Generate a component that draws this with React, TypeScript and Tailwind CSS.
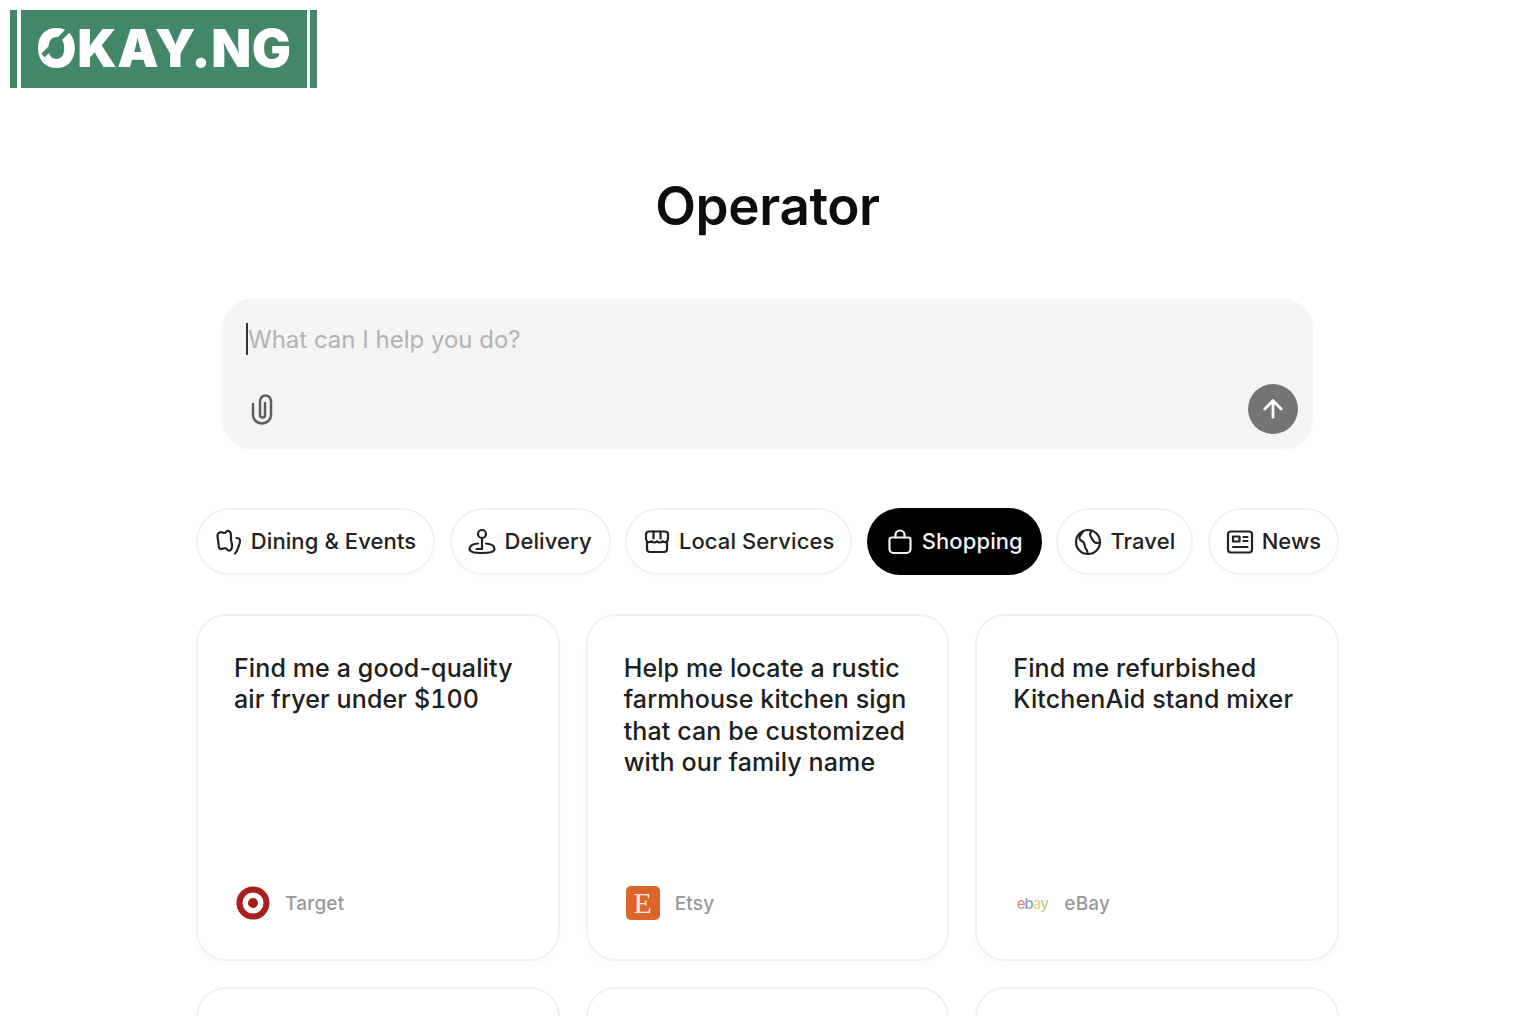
import { ReactNode } from "react";
import { ArrowUp } from "lucide-react";

type Category = {
  label: string;
  icon: ReactNode;
  active?: boolean;
  width: string;
};

function IconProps({ children }: { children: ReactNode }) {
  return (
    <svg
      width="28"
      height="28"
      viewBox="0 0 28 28"
      fill="none"
      stroke="currentColor"
      strokeWidth="2.200"
      strokeLinecap="round"
      strokeLinejoin="round"
      className="shrink-0"
    >
      {children}
    </svg>
  );
}

const categories: Category[] = [
  {
    label: "Dining & Events",
    width: "w-[239px]",
    icon: (
      <IconProps>
        <path d="M2.500 7.500c0-2.500 3-4 5-3 1 .5 2 1 3 0 1-1.300 2.500-2 4-1 1.500.8 1.500 3 1.500 4.500v3c0 3 1.500 5 1 8-.3 2-1.500 4-3.500 3.500-1.500-.4-2-2.500-3.500-2.500-1.500 0-2.500 1.500-4.500 1-2-.5-2-3-2-5 0-3-1-5.500-1-8.500Z" />
        <path d="M21.500 10c1.500 0 3 .5 3.500 2 .3 3-1 5.500-2 8-.5 1.800-1 3.500-3 5.500" />
      </IconProps>
    ),
  },
  {
    label: "Delivery",
    width: "w-[161px]",
    icon: (
      <IconProps>
        <circle cx="14" cy="6" r="4" />
        <path d="M14 10v11" />
        <path d="M10 15.500C5 16 1.500 18 1.500 21c0 2.500 4 4 12.500 4s12.500-1.500 12.500-4c0-3-3.500-5-8.500-5.500" />
        <path d="M8.500 21H14" />
      </IconProps>
    ),
  },
  {
    label: "Local Services",
    width: "w-[227px]",
    icon: (
      <IconProps>
        <path d="M6 3.500h16a3 3 0 0 1 3 3v4.500a3.200 3.200 0 0 1-5.500 2.200 3.700 3.700 0 0 1-5.500 0 3.700 3.700 0 0 1-5.500 0A3.200 3.200 0 0 1 3 11V6.500a3 3 0 0 1 3-3Z" />
        <path d="M10.500 3.500v7M17.500 3.500v7" />
        <path d="M4 13.500V21a3 3 0 0 0 3 3h14a3 3 0 0 0 3-3v-7.500" />
      </IconProps>
    ),
  },
  {
    label: "Shopping",
    width: "w-[175px]",
    active: true,
    icon: (
      <IconProps>
        <path d="M5.500 9.500h17a2 2 0 0 1 2 2V21a4 4 0 0 1-4 4h-13a4 4 0 0 1-4-4v-9.500a2 2 0 0 1 2-2Z" />
        <path d="M9.500 9.500V7a4.500 4.500 0 0 1 9 0v2.500" />
      </IconProps>
    ),
  },
  {
    label: "Travel",
    width: "w-[137px]",
    icon: (
      <IconProps>
        <circle cx="14" cy="14" r="12" />
        <path d="M9 3.500c-1.500 2.500-4 4-3.500 7 .5 2.300 3.500 2.500 4.500 4.500 1 2 .5 4.500 2 6 .8.800 1.500 2 1.500 4" />
        <path d="M17.500 3c-1.500 2-2 4-.5 6 1.500 2.200 2 4.500 4 5.500 1.500.7 3 .5 5 0" />
      </IconProps>
    ),
  },
  {
    label: "News",
    width: "w-[131px]",
    icon: (
      <IconProps>
        <rect x="2" y="3.500" width="24" height="21" rx="3" />
        <rect x="7" y="8.500" width="6.500" height="5" />
        <path d="M17.500 9h4M17.500 13h4M7 19h14.500" />
      </IconProps>
    ),
  },
];

function TargetLogo() {
  return (
    <svg width="34" height="34" viewBox="0 0 34 34" className="shrink-0">
      <circle cx="17" cy="17" r="13.500" fill="none" stroke="#a81f1c" strokeWidth="6" />
      <circle cx="17" cy="17" r="5" fill="#a81f1c" />
    </svg>
  );
}

function EtsyLogo() {
  return (
    <div className="flex h-[34px] w-[34px] shrink-0 items-center justify-center rounded-[5px] bg-[#dd6529] font-['Liberation_Serif',serif] text-[30px] leading-none text-[#fbeadd]">
      E
    </div>
  );
}

function EbayLogo() {
  return (
    <div className="flex w-[34px] shrink-0 justify-center font-['Inter',sans-serif] text-[15px] leading-none font-medium tracking-[-1px] opacity-70 blur-[0.4px]">
      <span className="text-[#d9534f]">e</span>
      <span className="text-[#4a6fc9]">b</span>
      <span className="text-[#e8c14a]">a</span>
      <span className="text-[#9cc04a]">y</span>
    </div>
  );
}

const cards = [
  {
    text: ["Find me a good-quality", "air fryer under $100"],
    vendor: "Target",
    logo: <TargetLogo />,
  },
  {
    text: [
      "Help me locate a rustic",
      "farmhouse kitchen sign",
      "that can be customized",
      "with our family name",
    ],
    vendor: "Etsy",
    logo: <EtsyLogo />,
  },
  {
    text: ["Find me refurbished", "KitchenAid stand mixer"],
    vendor: "eBay",
    logo: <EbayLogo />,
  },
];

function Logo() {
  return (
    <div className="flex h-[78px] w-[307px]">
      <div className="w-[7px] bg-[#438769]" />
      <div className="mr-[3px] ml-[4px] flex flex-1 items-center justify-center bg-[#438769]">
        <div className="relative font-['Inter',sans-serif] text-[52px] leading-none font-black tracking-[0.6px] text-white">
          OKAY.NG
          <div className="absolute top-[13px] left-[0px] h-[5px] w-[48px] -rotate-45 bg-[#438769]" />
        </div>
      </div>
      <div className="w-[7px] bg-[#438769]" />
    </div>
  );
}

export default function App() {
  return (
    <div className="h-[1016px] overflow-hidden bg-white font-['Inter',sans-serif] text-[#141414]">
      <div className="pt-[10px] pl-[10px]">
        <Logo />
      </div>

      <div className="ml-[196px] w-[1143px]">
        <h1 className="mt-[88px] text-center text-[53px] leading-[60px] font-semibold tracking-[-0.4px] text-[#0d0d0d]">
          Operator
        </h1>

        <div className="mx-auto mt-[63px] flex h-[150px] w-[1091px] flex-col justify-between rounded-[30px] bg-[#f4f4f4] pt-[24px] pr-[15px] pb-[15px] pl-[24px] shadow-[0_2px_6px_rgba(0,0,0,0.02)]">
          <div className="flex h-[32px] items-center">
            <div className="h-[32px] w-[2px] bg-[#333333]" />
            <span className="pt-[2px] text-[24px] leading-[32px] text-[#b3b3b3]">
              What can I help you do?
            </span>
          </div>
          <div className="flex items-center justify-between">
            <svg
              width="24"
              height="32"
              viewBox="0 0 24 32"
              fill="none"
              stroke="#5d5d5d"
              strokeWidth="2.500"
              strokeLinecap="round"
              className="ml-[4px]"
            >
              <path d="M3 11v11a9 8.500 0 0 0 18 0V8a5.500 5.500 0 0 0-11 0v14a2.500 2.500 0 0 0 5 0V10" />
            </svg>
            <button
              type="button"
              className="flex h-[50px] w-[50px] items-center justify-center rounded-full bg-[#747474] text-white"
            >
              <ArrowUp size={28} strokeWidth={2.400} />
            </button>
          </div>
        </div>

        <div className="mt-[59px] flex justify-between">
          {categories.map((c) => (
            <button
              key={c.label}
              type="button"
              className={
                c.active
                  ? `flex h-[67px] ${c.width} items-center justify-center gap-[8px] rounded-full bg-black text-[22px] font-medium tracking-[0.1px] text-[#f1f1f1]`
                  : `flex h-[67px] ${c.width} items-center justify-center gap-[8px] rounded-full border-2 border-[#f1f1f1] bg-white text-[22px] font-medium tracking-[0.1px] text-[#222222] shadow-[0_2px_4px_rgba(0,0,0,0.015)]`
              }
            >
              {c.icon}
              <span>{c.label}</span>
            </button>
          ))}
        </div>

        <div className="mt-[39px] grid grid-cols-3 gap-x-[26px] gap-y-[26px]">
          {cards.map((card) => (
            <div
              key={card.vendor}
              className="flex h-[347px] flex-col justify-between rounded-[30px] border-2 border-[#f0f0f0] bg-white pt-[37px] pr-[20px] pb-[39px] pl-[36px] shadow-[0_4px_10px_rgba(0,0,0,0.02)]"
            >
              <div className="text-[25px] leading-[31.300px] font-medium tracking-[0.12px] whitespace-nowrap text-[#202020]">
                {card.text.map((line) => (
                  <div key={line} className={line.includes("$") ? "tabular-nums" : ""}>
                    {line}
                  </div>
                ))}
              </div>
              <div className="ml-[2px] flex h-[34px] items-center gap-[15px]">
                {card.logo}
                <span className="pt-[2px] text-[19px] font-medium tracking-[0.2px] text-[#999999]">
                  {card.vendor}
                </span>
              </div>
            </div>
          ))}
          {[0, 1, 2].map((i) => (
            <div
              key={i}
              className="h-[347px] rounded-[30px] border-2 border-[#f0f0f0] bg-white"
            />
          ))}
        </div>
      </div>
    </div>
  );
}
